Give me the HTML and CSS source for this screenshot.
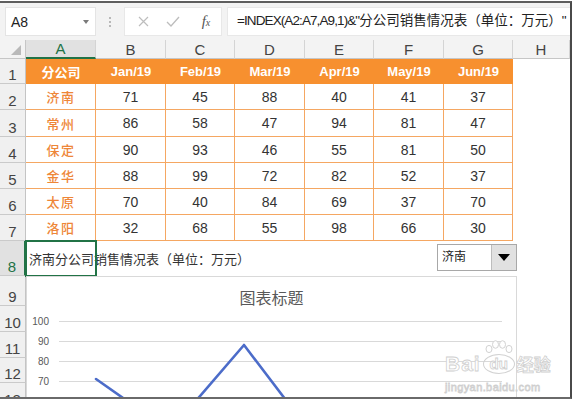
FILE: index.html
```html
<!DOCTYPE html>
<html lang="zh">
<head>
<meta charset="utf-8">
<title>Excel</title>
<link rel="stylesheet" href="styles.css">
</head>
<body>
<div class="window">
  <div class="fbar">
    <div class="namebox"><span class="nb-text">A8</span><span class="nb-caret"></span></div>
    <div class="grip"><i></i><i></i><i></i></div>
    <div class="fbtns">
      <svg class="ic" width="11" height="11" viewBox="0 0 11 11"><path d="M1 1L10 10M10 1L1 10" stroke="#bdbdbd" stroke-width="1.2" fill="none"/></svg>
      <svg class="ic" width="14" height="11" viewBox="0 0 14 11"><path d="M1 6L5 10L13 1" stroke="#bdbdbd" stroke-width="1.3" fill="none"/></svg>
      <span class="fx">f<span class="fx-x">x</span></span>
    </div>
    <div class="finput"><span class="f-lat">=INDEX(A2:A7,A9,1)&amp;"</span>分公司销售情况表（单位：万元）"</div>
  </div>
  <div class="sheet">
    <div class="corner"><span class="tri"></span></div>
    <div class="ch sel">A</div><div class="ch">B</div><div class="ch">C</div><div class="ch">D</div><div class="ch">E</div><div class="ch">F</div><div class="ch">G</div><div class="ch">H</div>

    <div class="rh">1</div>
    <div class="hd">分公司</div><div class="hd">Jan/19</div><div class="hd">Feb/19</div><div class="hd">Mar/19</div><div class="hd">Apr/19</div><div class="hd">May/19</div><div class="hd">Jun/19</div><div class="ec"></div>

    <div class="rh">2</div>
    <div class="td city">济南</div><div class="td">71</div><div class="td">45</div><div class="td">88</div><div class="td">40</div><div class="td">41</div><div class="td">37</div><div class="ec"></div>

    <div class="rh">3</div>
    <div class="td city">常州</div><div class="td">86</div><div class="td">58</div><div class="td">47</div><div class="td">94</div><div class="td">81</div><div class="td">47</div><div class="ec"></div>

    <div class="rh">4</div>
    <div class="td city">保定</div><div class="td">90</div><div class="td">93</div><div class="td">46</div><div class="td">55</div><div class="td">81</div><div class="td">50</div><div class="ec"></div>

    <div class="rh">5</div>
    <div class="td city">金华</div><div class="td">88</div><div class="td">99</div><div class="td">72</div><div class="td">82</div><div class="td">52</div><div class="td">37</div><div class="ec"></div>

    <div class="rh">6</div>
    <div class="td city">太原</div><div class="td">70</div><div class="td">40</div><div class="td">84</div><div class="td">69</div><div class="td">37</div><div class="td">70</div><div class="ec"></div>

    <div class="rh">7</div>
    <div class="td city">洛阳</div><div class="td">32</div><div class="td">68</div><div class="td">55</div><div class="td">98</div><div class="td">66</div><div class="td">30</div><div class="ec"></div>

    <div class="rh rsel">8</div>
    <div class="a8">济南分公司销售情况表（单位：万元）</div><div class="ec"></div><div class="ec"></div><div class="ec"></div><div class="ec"></div><div class="ec"></div><div class="ec"></div><div class="ec"></div>

    <div class="rh">9</div>
    <div class="ec"></div><div class="ec"></div><div class="ec"></div><div class="ec"></div><div class="ec"></div><div class="ec"></div><div class="ec"></div><div class="ec"></div>
    <div class="rh">10</div>
    <div class="ec"></div><div class="ec"></div><div class="ec"></div><div class="ec"></div><div class="ec"></div><div class="ec"></div><div class="ec"></div><div class="ec"></div>
    <div class="rh">11</div>
    <div class="ec"></div><div class="ec"></div><div class="ec"></div><div class="ec"></div><div class="ec"></div><div class="ec"></div><div class="ec"></div><div class="ec"></div>
    <div class="rh">12</div>
    <div class="ec"></div><div class="ec"></div><div class="ec"></div><div class="ec"></div><div class="ec"></div><div class="ec"></div><div class="ec"></div><div class="ec"></div>
    <div class="rh">13</div>
    <div class="ec"></div><div class="ec"></div><div class="ec"></div><div class="ec"></div><div class="ec"></div><div class="ec"></div><div class="ec"></div><div class="ec"></div>

    <div class="dropdown"><span class="dd-label">济南</span><span class="dd-btn"><span class="dd-arrow"></span></span></div>

    <div class="chart">
      <div class="chart-title">图表标题</div>
      <svg class="plot" width="489" height="110" viewBox="0 0 489 110">
        <g stroke="#d9d9d9" stroke-width="1">
          <line x1="32" y1="14.5" x2="475" y2="14.5"/>
          <line x1="32" y1="34.5" x2="475" y2="34.5"/>
          <line x1="32" y1="54.5" x2="475" y2="54.5"/>
          <line x1="32" y1="74.5" x2="475" y2="74.5"/>
          <line x1="32" y1="94.5" x2="475" y2="94.5"/>
        </g>
        <g class="ylab" text-anchor="end">
          <text x="22" y="18">100</text>
          <text x="22" y="38">90</text>
          <text x="22" y="58">80</text>
          <text x="22" y="78">70</text>
          <text x="22" y="98">60</text>
        </g>
        <polyline points="69,72 143,124 217,38 290,134 364,132 438,140" fill="none" stroke="#4c6cc9" stroke-width="2.6" stroke-linejoin="round" stroke-linecap="round"/>
      </svg>
    </div>

    <div class="wm">
      <div class="wm-top">
        <span class="wm-bai">Bai</span>
        <span class="wm-du"><svg class="paw" width="30" height="14" viewBox="0 0 30 14"><g fill="#fff" stroke="#d2d2d2" stroke-width="1"><ellipse cx="5" cy="9" rx="3" ry="3.6"/><ellipse cx="11.5" cy="4.5" rx="3" ry="3.8"/><ellipse cx="18.5" cy="4.5" rx="3" ry="3.8"/><ellipse cx="25" cy="9" rx="3" ry="3.6"/></g></svg><span class="du-txt">du</span></span>
        <span class="wm-jy">经验</span>
      </div>
      <div class="wm-url">jingyan.baidu.com</div>
    </div>
  </div>
</div>
</body>
</html>
```
FILE: styles.css
```css
* { box-sizing: border-box; margin: 0; padding: 0; }
html, body { background: #fff; }
body {
  width: 583px;
  height: 407px;
  overflow: hidden;
  font-family: "Liberation Sans", "Noto Sans CJK SC", sans-serif;
  color: #333;
}
.window {
  width: 572px;
  height: 398px;
  margin-top: 1px;
  border-top: 2px solid #5e5e5e;
  border-right: 2px solid #4a4a4a;
  border-bottom: 2px solid #6a6a6a;
  overflow: hidden;
  display: flex;
  flex-direction: column;
}

/* formula bar */
.fbar {
  height: 37px;
  flex: none;
  background: #f3f3f3;
  display: flex;
  align-items: flex-start;
  padding: 4px 0 0 5px;
}
.namebox {
  width: 91px;
  height: 29px;
  background: #fff;
  border: 1px solid #e4e4e4;
  display: flex;
  align-items: center;
  padding-left: 5px;
  font-size: 14px;
  color: #222;
}
.nb-caret {
  margin-left: auto;
  margin-right: 6px;
  width: 0; height: 0;
  border-left: 3.5px solid transparent;
  border-right: 3.5px solid transparent;
  border-top: 4px solid #7a7a7a;
}
.grip {
  width: 28px;
  height: 29px;
  display: flex;
  flex-direction: column;
  align-items: center;
  justify-content: center;
  gap: 2px;
}
.grip i {
  display: block;
  width: 2px; height: 2px;
  background: #b8b8b8;
}
.fbtns {
  width: 98px;
  height: 29px;
  background: #fff;
  border: 1px solid #e8e8e8;
  display: grid;
  grid-template-columns: 36px 24px 38px;
  align-items: center;
  justify-items: center;
}
.fx {
  font-family: "Liberation Serif", serif;
  font-style: italic;
  font-size: 15px;
  color: #555;
  margin-left: 4px;
}
.fx-x { font-size: 10px; }
.finput {
  flex: 1;
  height: 29px;
  margin-left: 5px;
  background: #fff;
  border: 1px solid #e8e8e8;
  border-right: none;
  padding-left: 9px;
  font-size: 13.5px;
  line-height: 25px;
  white-space: nowrap;
  overflow: hidden;
  color: #222;
}
.f-lat { letter-spacing: -0.9px; }

/* sheet grid */
.sheet {
  position: relative;
  height: 357px;
  flex: none;
  overflow: hidden;
  display: grid;
  grid-template-columns: 26px 70px 70px 69px 70px 69px 70px 69px 57px;
  grid-template-rows: 19px 25px 26px 27px 26px 26px 26px 26px 35px 30px 26px 26px 25px 26px;
}
.corner {
  background: #f3f3f3;
  border-right: 1px solid #c6c6c6;
  border-bottom: 1px solid #c6c6c6;
  position: relative;
}
.tri {
  position: absolute;
  right: 4px; bottom: 3px;
  width: 0; height: 0;
  border-left: 10px solid transparent;
  border-bottom: 10px solid #b9b9b9;
}
.ch {
  background: #f3f3f3;
  border-right: 1px solid #d4d4d4;
  border-bottom: 1px solid #c6c6c6;
  display: flex;
  align-items: center;
  justify-content: center;
  font-size: 15px;
  color: #444;
}
.ch.sel {
  background: #e1e1e1;
  border-bottom: 2px solid #217346;
  color: #217346;
}
.rh {
  background: #f0f0f0;
  border-right: 1px solid #c4c4c4;
  border-bottom: 1px solid #cacaca;
  display: flex;
  align-items: flex-end;
  justify-content: center;
  padding-bottom: 1px;
  font-size: 15px;
  line-height: 15px;
  color: #444;
}
.rh.rsel {
  background: #e1e1e1;
  color: #217346;
  border-right: 2px solid #217346;
}
.hd {
  background: #f7902f;
  color: #fff;
  font-weight: bold;
  font-size: 13px;
  display: flex;
  align-items: center;
  justify-content: center;
}
.td {
  border-right: 1px solid #f5a762;
  border-bottom: 1px solid #f5a762;
  display: flex;
  align-items: center;
  justify-content: center;
  font-size: 14px;
  color: #333;
}
.td.city {
  font-family: "Noto Sans CJK SC", sans-serif;
  color: #ee8638;
  font-size: 13px;
  font-weight: 500;
  letter-spacing: 1.5px;
  padding-left: 1px;
}
.ec { background: transparent; }
.a8 {
  position: relative;
  display: flex;
  align-items: flex-end;
  padding: 0 0 8px 3px;
  font-size: 13px;
  line-height: 16px;
  white-space: nowrap;
  color: #333;
  z-index: 1;
}
.a8::after {
  content: "";
  position: absolute;
  left: -1px; top: -1px; right: -1px; bottom: -1px;
  border: 2px solid #217346;
}

/* dropdown control */
.dropdown {
  position: absolute;
  left: 437px;
  top: 204px;
  width: 80px;
  height: 27px;
  background: #fff;
  border: 1px solid #a8a8a8;
  display: flex;
  z-index: 2;
}
.dd-label {
  flex: 1;
  padding-left: 4px;
  font-size: 12px;
  line-height: 25px;
  color: #222;
}
.dd-btn {
  width: 25px;
  background: #e1e1e1;
  border-left: 1px solid #bdbdbd;
  display: flex;
  align-items: center;
  justify-content: center;
}
.dd-arrow {
  width: 0; height: 0;
  border-left: 6px solid transparent;
  border-right: 6px solid transparent;
  border-top: 7px solid #000;
}

/* chart */
.chart {
  position: absolute;
  left: 26px;
  top: 236px;
  width: 491px;
  height: 140px;
  background: #fff;
  border: 1px solid #d9d9d9;
  z-index: 2;
}
.chart-title {
  height: 30px;
  padding-top: 10px;
  text-align: center;
  font-family: "Noto Sans CJK SC", sans-serif;
  font-size: 16px;
  line-height: 20px;
  color: #595959;
}
.plot { display: block; }
.ylab {
  font-family: "Liberation Sans", sans-serif;
  font-size: 10px;
  fill: #595959;
}

/* watermark */
.wm {
  position: absolute;
  left: 445px;
  top: 298px;
  width: 112px;
  z-index: 3;
  display: flex;
  flex-direction: column;
  align-items: flex-start;
}
.wm-top {
  display: flex;
  align-items: flex-end;
  height: 36px;
}
.wm-bai, .wm-jy, .du-txt, .wm-url {
  color: #fff;
  -webkit-text-stroke: 0.8px #cfcfcf;
}
.wm-bai {
  font-family: "Liberation Sans", sans-serif;
  font-size: 21px;
  font-weight: bold;
  line-height: 20px;
  letter-spacing: 1px;
}
.wm-du {
  position: relative;
  margin-left: 2px;
  width: 32px;
  height: 20px;
  border: 1px solid #d2d2d2;
  border-radius: 50%;
  display: flex;
  align-items: center;
  justify-content: center;
}
.paw {
  position: absolute;
  left: 0; top: -15px;
}
.du-txt {
  font-family: "Liberation Sans", sans-serif;
  font-size: 15px;
  font-weight: bold;
  line-height: 16px;
}
.wm-jy {
  margin-left: 2px;
  font-family: "Noto Sans CJK SC", sans-serif;
  font-size: 17px;
  font-weight: bold;
  line-height: 20px;
}
.wm-url {
  margin-top: 8px;
  font-family: "Liberation Sans", sans-serif;
  font-size: 11px;
  line-height: 11px;
  letter-spacing: 0.4px;
}
```
